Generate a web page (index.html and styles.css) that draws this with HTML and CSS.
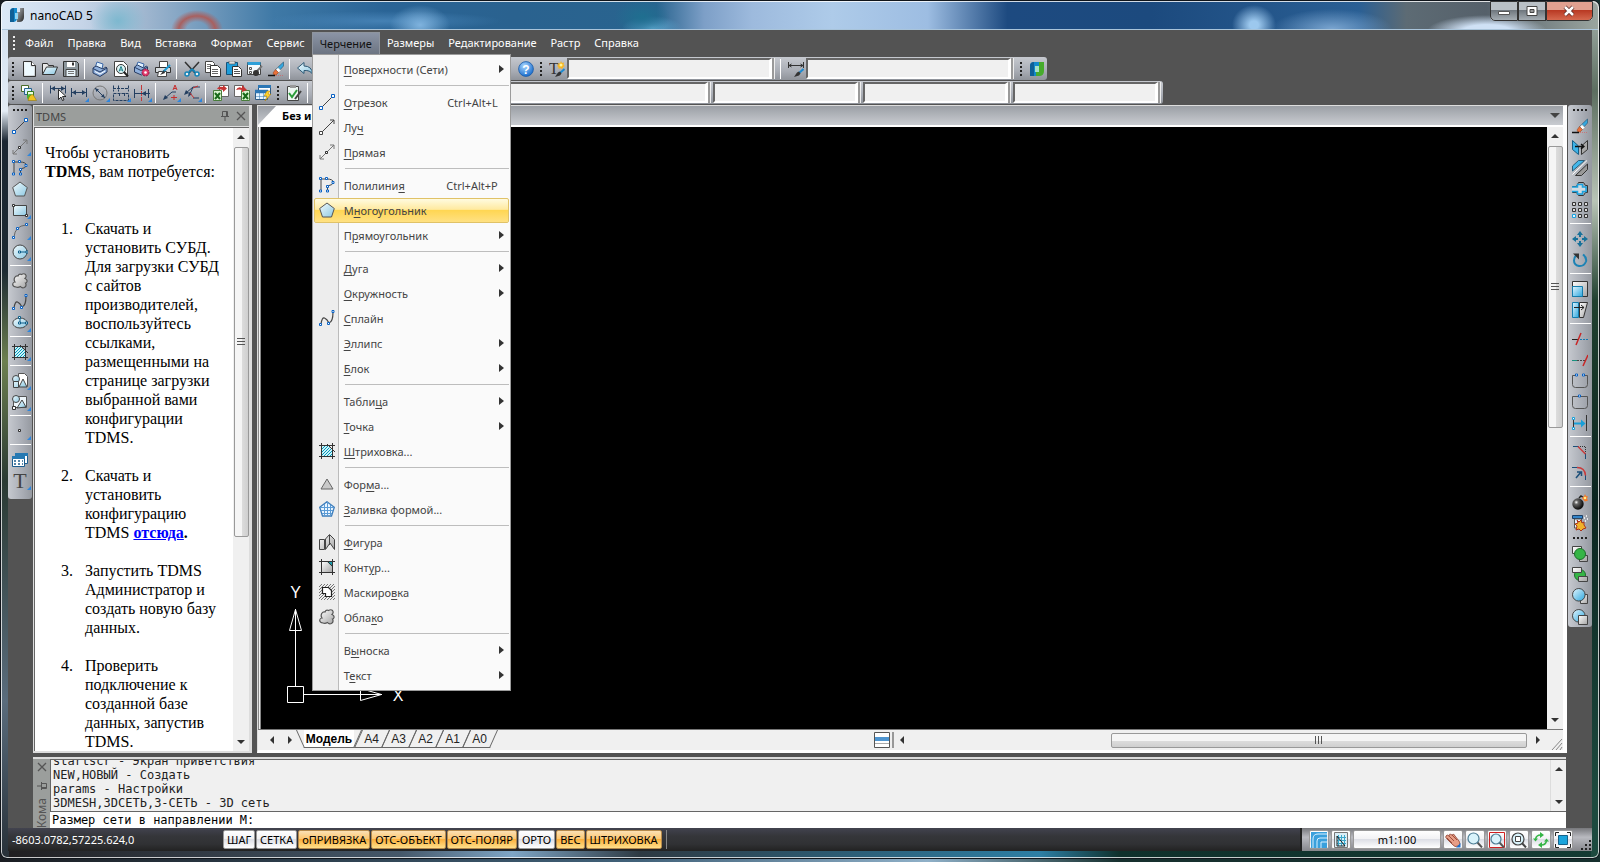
FILE: index.html
```html
<!DOCTYPE html>
<html lang="ru">
<head>
    <meta charset="UTF-8">
    <title>nanoCAD 5</title>
    <link rel="stylesheet" href="styles.css">
</head>
<body>
<!-- icon sprite -->
<svg class="sprite" aria-hidden="true">
    <defs>
        <linearGradient id="gBlue" x1="0" y1="0" x2="1" y2="1"><stop offset="0" stop-color="#f2fbfe"/><stop offset="1" stop-color="#8cc8e2"/></linearGradient>
        <linearGradient id="gSky" x1="0" y1="0" x2="1" y2="1"><stop offset="0" stop-color="#e4f6ff"/><stop offset="1" stop-color="#2ba7de"/></linearGradient>
        <linearGradient id="gGrey" x1="0" y1="0" x2="1" y2="1"><stop offset="0" stop-color="#ffffff"/><stop offset="1" stop-color="#a4a4a4"/></linearGradient>
        <linearGradient id="gLogo" x1="0" y1="0" x2="1" y2="1"><stop offset="0" stop-color="#b5b9bd"/><stop offset="1" stop-color="#222"/></linearGradient>
        <radialGradient id="gHelp" cx=".4" cy=".3" r=".7"><stop offset="0" stop-color="#a9d6ff"/><stop offset="1" stop-color="#1c6fce"/></radialGradient>
        <radialGradient id="gBomb" cx=".35" cy=".35" r=".6"><stop offset="0" stop-color="#fff"/><stop offset=".3" stop-color="#666"/><stop offset="1" stop-color="#111"/></radialGradient>
        <pattern id="pHatch" width="3" height="3" patternUnits="userSpaceOnUse"><rect width="3" height="3" fill="#c9f3fa"/><path d="M0 3 3 0" stroke="#0797b8"/></pattern>
        <pattern id="pMask" width="3" height="3" patternUnits="userSpaceOnUse"><path d="M0 3 3 0" stroke="#555" stroke-width=".8"/></pattern>
    </defs>
    <symbol id="logo" viewBox="0 0 16 16"><path d="M1 15V5q0-4 4-4h3v10q0 4-4 4z" fill="#1389cc"/><path d="M1 15V5q0-4 4-4v14z" fill="#0f5f96"/><path d="M8 15V5h3V1h4v9q0 5-5 5z" fill="url(#gLogo)"/><path d="M6 6h3v6H6z" fill="#8fd3f3"/></symbol>
    <symbol id="logo-green" viewBox="0 0 16 16"><path d="M1 15V5q0-4 4-4h5v4H8v10z" fill="#1389cc"/><path d="M1 15V5q0-4 4-4v14z" fill="#0f5f96"/><path d="M7 15v-4h3V1h5v9q0 5-5 5z" fill="#46ac2c"/><path d="M6 5h4v6H6z" fill="#a7e0c8"/></symbol>
    <symbol id="new" viewBox="0 0 16 16"><path d="M2.500.5h8l4 4v11h-12z" fill="url(#gGrey)" stroke="#333"/><path d="M3.500 1.500h6v4h4v9h-10z" fill="#eefaff"/><path d="M10.500.5v4h4" fill="#fff" stroke="#333"/></symbol>
    <symbol id="open" viewBox="0 0 16 16"><path d="M.5 13.500v-11h5l1 2h5v3" fill="#e9e9e9" stroke="#333"/><path d="M.5 13.500 4.500 6h11l-3 7.500z" fill="url(#gBlue)" stroke="#333"/></symbol>
    <symbol id="save" viewBox="0 0 16 16"><path d="M.5.5h13l2 2v13H.5z" fill="#8d979d" stroke="#333"/><path d="M4 1h8v5H4z" fill="#fff"/><path d="M9 1.500h2v3H9z" fill="#333"/><path d="M3 8.500h10v7H3z" fill="#e9f6fc" stroke="#444"/><path d="M5 10.500h6M5 12.500h6" stroke="#777"/></symbol>
    <symbol id="print" viewBox="0 0 16 16"><path d="M3 7l2-6 6 2-1 5" fill="#e2f2ff" stroke="#3a66a8"/><path d="M1 7l3-2 7 3 3-2 1 1v4l-7 4.500L1 12z" fill="#8fb0dd" stroke="#273c63"/><path d="M1 7.500l7 3.500 7-4" fill="none" stroke="#273c63"/><path d="M3 10.500l5 2.500 5-3" stroke="#fff" fill="none"/></symbol>
    <symbol id="preview" viewBox="0 0 16 16"><path d="M1.500.5h9l4 4v11h-13z" fill="#fff" stroke="#444"/><circle cx="8" cy="8" r="4.500" fill="#ddf4f6" stroke="#333"/><path d="M6 10.500 8 5.500l2 5M7 9h2" fill="none" stroke="#157a83"/><path d="M11 11l4 4.500" stroke="#222" stroke-width="2"/></symbol>
    <symbol id="plot" viewBox="0 0 16 16"><path d="M2 6l2-5 6 2-1 4" fill="#e2f2ff" stroke="#3a66a8"/><path d="M.5 6l3-2 6 3 3-2 1 1v4l-6 4-7-3z" fill="#8fb0dd" stroke="#273c63"/><path d="M1 6.500l6 3 6-3" fill="none" stroke="#273c63"/><circle cx="11.500" cy="11.500" r="3.500" fill="#e23a6d" stroke="#8e1238" stroke-dasharray="2 1"/><circle cx="11.500" cy="11.500" r="1.300" fill="#fff"/></symbol>
    <symbol id="print-setup" viewBox="0 0 16 16"><path d="M4.500 6V.5h8V6" fill="#fff" stroke="#444"/><path d="M.5 6.500h15v5H.5z" fill="#d6dbdf" stroke="#333"/><path d="M3.500 10.500h8v5h-9z" fill="#fff" stroke="#444"/><path d="M15 4 8 11" stroke="#1b9ad6" stroke-width="2"/><path d="M9 9l-4 5 5-2z" fill="#333"/></symbol>
    <symbol id="cut" viewBox="0 0 16 16"><path d="M1 1l10 11M15 1 5 12" stroke="#333" stroke-width="1.500"/><path d="M8 8l3 3M8 8l-3 3" stroke="#1484b8" stroke-width="2"/><circle cx="3" cy="13" r="2" fill="#eee" stroke="#1484b8" stroke-width="1.500"/><circle cx="13" cy="13" r="2" fill="#eee" stroke="#1484b8" stroke-width="1.500"/></symbol>
    <symbol id="copy" viewBox="0 0 16 16"><path d="M.5.5h7l2 2v9h-9z" fill="#fff" stroke="#444"/><path d="M2 3.500h4M2 5.500h4M2 7.500h4" stroke="#777"/><path d="M5.500 4.500h7l3 3v8h-10z" fill="#fff" stroke="#333"/><path d="M7 8.500h6M7 10.500h6M7 12.500h6" stroke="#666"/></symbol>
    <symbol id="paste" viewBox="0 0 16 16"><path d="M.5 1.500h11v12H.5z" fill="#1d9dda" stroke="#15537a"/><path d="M3 0h6v3H3z" fill="#ddd" stroke="#555" stroke-width=".6"/><path d="M6.500 5.500h6l3 3v7h-9z" fill="#fff" stroke="#333"/><path d="M8 8.500h4M8 10.500h6M8 12.500h6" stroke="#555"/></symbol>
    <symbol id="match" viewBox="0 0 16 16"><path d="M.5 1.500h13v12H.5z" fill="#f4f9fc" stroke="#444"/><path d="M.5 1h13v3H.5z" fill="#2d9fd8"/><path d="M2.500 6.500h2v2h-2zM2.500 10.500h2v2h-2z" fill="none" stroke="#555"/><path d="M15 5 9 11" stroke="#777" stroke-width="2"/><circle cx="9" cy="12" r="3" fill="#333"/></symbol>
    <symbol id="brush" viewBox="0 0 16 16"><path d="M15.500 1v4L10 11 7.500 8.500z" fill="#35a8e0" stroke="#22536e" stroke-width=".6"/><path d="M10 6.500l3 3-2.500 2.500-3-3z" fill="#fff" stroke="#888" stroke-width=".6"/><path d="M7.500 8.500l3 3L8 14H6l-1-2z" fill="#e9713a" stroke="#8c3c1a" stroke-width=".5"/><path d="M0 14.500h7" stroke="#111" stroke-width="1.500"/><path d="M8 14.500h7" stroke="#d55" stroke-width=".6" stroke-dasharray="1 1"/></symbol>
    <symbol id="undo" viewBox="0 0 16 16"><path d="M.5 7 7 1.500V5q8 0 8.500 8Q13 9 7 9.500v3z" fill="url(#gBlue)" stroke="#2c5874"/></symbol>
    <symbol id="dim-style" viewBox="0 0 16 16"><path d="M.5 1v6M15.500 1v6M1 4.500h14M3.500 3 1 4.500 3.500 6M12.500 3 15 4.500 12.500 6" fill="none" stroke="#333"/><path d="M15.500 8 11 12" stroke="#1d8ad0" stroke-width="2"/><path d="M11 10.500l-2 1-3 4.500 5-1.500 1.500-2z" fill="#333"/></symbol>
    <symbol id="layers" viewBox="0 0 16 16"><path d="M.5.5h7v6h-7z" fill="#fff" stroke="#4a6d2a"/><path d="M3.500 3.500h7v6h-7z" fill="#d9f2ff" stroke="#27628f"/><path d="M6.500 6.500h6v6h-6z" fill="#ecffe0" stroke="#347a19"/><circle cx="9" cy="12" r="3" fill="#4bb636"/><path d="M7 15.500q1-6 5-6l3.500 6z" fill="#f0c321" stroke="#8b6c00" stroke-width=".5"/></symbol>
    <symbol id="dim-select" viewBox="0 0 16 16"><path d="M.5.5v8M15.500.5v8M0 3.500h16" stroke="#243f60"/><path d="M1 3.500l4-2.500v5zM15 3.500 11 1v5z" fill="#243f60"/><path d="M8.500 4.500v10l2.500-2.500 1.500 3.500 1.500-.7-1.500-3.300H16z" fill="#fff" stroke="#000" stroke-width=".8"/></symbol>
    <symbol id="dim" viewBox="0 0 16 16"><path d="M.5 3v9M15.500 3v9M1 7.500h14" stroke="#243f60"/><path d="M1 7.500 5 5v5zM15 7.500 11 5v5z" fill="#243f60"/></symbol>
    <symbol id="diameter" viewBox="0 0 16 16"><circle cx="8" cy="8" r="7" fill="none" stroke="#777"/><path d="M3 3l10 10" stroke="#243f60"/><path d="M3 3l4 1.500L4.500 7zM13 13l-4-1.500L11.500 9z" fill="#243f60"/></symbol>
    <symbol id="dim-group" viewBox="0 0 16 16"><path d="M.5.5v6M5.500.5v6M15.500.5v6M0 3.500h16M.5 8.500h15v7H.5zM6.500 8v3M11.500 8v3" fill="none" stroke="#243f60" stroke-dasharray="3 1"/></symbol>
    <symbol id="dim-center" viewBox="0 0 16 16"><path d="M7.500 0v16" stroke="#c43a3a" stroke-dasharray="5 1"/><path d="M.5 4v9M14.500 4v9M0 8.500h16" stroke="#243f60"/><path d="M7.500 8.500 12 6v5z" fill="#243f60"/></symbol>
    <symbol id="leader" viewBox="0 0 16 16"><path d="M1 14 9 7h4" fill="none" stroke="#243f60"/><path d="M0 15l5-2-3-3z" fill="#243f60"/><path d="M10 5l2-5 2 5M11 3.500h2M8 12.500h6M11 10v5" fill="none" stroke="#c62f2f"/></symbol>
    <symbol id="leader-tree" viewBox="0 0 16 16"><path d="M2 8 9 2h7M9 2 6 9M9 13h6" fill="none" stroke="#243f60"/><path d="M0 10l5-2-3-3zM4 12l1-5 3 2z" fill="#243f60"/><path d="M6 8l4 5M9 3l5-2" stroke="#c62f2f"/></symbol>
    <symbol id="xls-in" viewBox="0 0 16 16"><path d="M6.500.5h9v11h-9z" fill="#fff" stroke="#666"/><path d="M.5 5.500h8v10h-8z" fill="#d9f5cf" stroke="#4a7d3c"/><path d="M2 8l5 6M7 8l-5 6" stroke="#1a6b1a" stroke-width="2"/><path d="M4 4q1-3 6-2V0l4 3.500L10 7V5Q6 4 4 4z" fill="#c63434"/></symbol>
    <symbol id="xls-out" viewBox="0 0 16 16"><path d="M.5.5h9v11h-9z" fill="#fff" stroke="#666"/><path d="M7.500 5.500h8v10h-8z" fill="#d9f5cf" stroke="#4a7d3c"/><path d="M9 8l5 6M14 8l-5 6" stroke="#1a6b1a" stroke-width="2"/><path d="M2 5q2-4 6-2V0l5 5-5 2V5Q5 4 2 5z" fill="#c63434"/></symbol>
    <symbol id="table-flash" viewBox="0 0 16 16"><path d="M3.500.5h12v9h-12z" fill="#fff" stroke="#2c5a85"/><path d="M3 0h13v3H3z" fill="#2c77b5"/><path d="M.5 5.500h12v9H.5z" fill="#e7f5ff" stroke="#2c5a85"/><path d="M0 5h13v3H0zM1 11.500h11M4.500 8v6M8.500 8v6" fill="#2c77b5" stroke="#2c77b5" stroke-width=".5"/><path d="M12 6l-3 5h3l-2 5 6-7h-3l2-3z" fill="#ffd22e" stroke="#a87b00" stroke-width=".5"/></symbol>
    <symbol id="check-edit" viewBox="0 0 16 16"><path d="M1.500 1.500h11v14h-11z" fill="#eef7f2" stroke="#444"/><path d="M4 0h6v3H4z" fill="#999"/><path d="M3 8l3 4 5-7" fill="none" stroke="#2b9c3a" stroke-width="2"/><path d="M15 6 9 14" stroke="#444" stroke-width="2"/></symbol>

    <symbol id="line" viewBox="0 0 16 16"><path d="M2 14 14 2" stroke="#444"/><path d="M.5 12.500h3v3h-3zM12.500.5h3v3h-3z" fill="#fff" stroke="#0a62c4"/></symbol>
    <symbol id="ray" viewBox="0 0 16 16"><path d="M2 14 15 1M11 1h4v4" fill="none" stroke="#444"/><path d="M.5 12.500h3v3h-3z" fill="#fff" stroke="#444"/></symbol>
    <symbol id="xline" viewBox="0 0 16 16"><path d="M1 15 15 1M11 1h4v4M1 11v4h4" fill="none" stroke="#777"/><path d="M6.500 7.500h2v2h-2z" fill="#fff" stroke="#333"/></symbol>
    <symbol id="pline" viewBox="0 0 16 16"><path d="M2 14V2h6q6 0 6.500 3.500Q14 8 8.500 9v5" fill="none" stroke="#444"/><path d="M.5.5h2v2h-2zM6.500.5h2v2h-2zM13 4.500h2v2h-2zM7.500 8.500h2v2h-2zM.5 13h2v2h-2zM7.500 13h2v2h-2z" fill="#fff" stroke="#0a62c4"/></symbol>
    <symbol id="polygon" viewBox="0 0 16 16"><path d="M8 1l7.300 5.500L12.500 15h-9L.7 6.500z" fill="url(#gBlue)" stroke="#555"/></symbol>
    <symbol id="rect" viewBox="0 0 16 16"><path d="M1.500 3.500h13v10h-13z" fill="url(#gBlue)" stroke="#444"/><path d="M.5 2.500h2v2h-2zM13.500 12.500h2v2h-2z" fill="#fff" stroke="#333"/></symbol>
    <symbol id="arc" viewBox="0 0 16 16"><path d="M2 14Q3 3 14 2" fill="none" stroke="#666"/><path d="M.5 13.500h2v2h-2zM4.500 4.500h2v2h-2zM13.500.5h2v2h-2z" fill="#fff" stroke="#0a62c4"/></symbol>
    <symbol id="circle" viewBox="0 0 16 16"><circle cx="8" cy="8" r="7" fill="url(#gBlue)" stroke="#444"/><path d="M8 8h7" stroke="#0d5f8a"/><path d="M6.500 7h2v2h-2zM14 7h2v2h-2z" fill="#fff" stroke="#0d5f8a"/></symbol>
    <symbol id="cloud" viewBox="0 0 16 16"><path d="M6 3q1-2.500 3.500-1.500Q12 0 13.500 1.500q1.500 2-.5 4 2.500 1 2 3-.200 1.500-1.500 1.500 1.500 3-1 4.500-2.500 1-4-1-2.500 1.500-4.500.5Q.5 13.500.7 11q.3-2 2.300-2-1.500-2-.3-4.500Q4 2.500 6 3z" fill="url(#gGrey)" stroke="#555" stroke-width="1.200"/></symbol>
    <symbol id="spline" viewBox="0 0 16 16"><path d="M2 14Q3 7 5.500 8T10 13q4-1 4-11" fill="none" stroke="#444" stroke-width="1.200"/><path d="M.5 13.500h2v2h-2zM8.500 12.500h2v2h-2zM13 .5h2v2h-2z" fill="#fff" stroke="#0a62c4"/></symbol>
    <symbol id="ellipse" viewBox="0 0 16 16"><ellipse cx="8" cy="8" rx="7.200" ry="5" fill="url(#gBlue)" stroke="#444"/><path d="M8 3v5h7" fill="none" stroke="#0d5f8a"/><path d="M6.500 1.500h2v2h-2zM6.500 7h2v2h-2zM13.500 7h2v2h-2z" fill="#fff" stroke="#0d5f8a"/></symbol>
    <symbol id="hatch" viewBox="0 0 16 16"><path d="M2.500 2.500h6l5 5v6h-11z" fill="url(#pHatch)"/><path d="M2.500 0v16M13.500 0v16M0 2.500h16M0 13.500h16M8 1l8 8" fill="none" stroke="#333"/></symbol>
    <symbol id="block-make" viewBox="0 0 16 16"><path d="M6.500.5h6l3 3v10h-9z" fill="#fff" stroke="#555"/><circle cx="4" cy="6" r="3.500" fill="url(#gBlue)" stroke="#444"/><path d="M1.500 8.500h5v6h-5zM7 14l4-8 4 8z" fill="url(#gBlue)" stroke="#444"/></symbol>
    <symbol id="block-insert" viewBox="0 0 16 16"><path d="M1.500 2.500h13v11h-13z" fill="#eef6fa" stroke="#555"/><circle cx="4" cy="5" r="3.500" fill="url(#gBlue)" stroke="#444"/><path d="M5 14l5-8 4 7z" fill="url(#gBlue)" stroke="#444"/><path d="M.5 12.500h3v3h-3z" fill="#fff" stroke="#333"/></symbol>
    <symbol id="point" viewBox="0 0 16 16"><path d="M6.500 6.500h2v2h-2z" fill="#fff" stroke="#333"/></symbol>
    <symbol id="table" viewBox="0 0 16 16"><path d="M3.500 1.500h12v10h-12z" fill="#fff" stroke="#1d5d8e"/><path d="M3 1h13v3H3z" fill="#2679b2"/><path d="M.5 4.500h12v10H.5z" fill="#fff" stroke="#1d5d8e"/><path d="M0 4h13v3H0z" fill="#2679b2"/><path d="M2 9h2M6 9h2M10 9h1M2 12h2M6 12h2M10 12h1" stroke="#1d5d8e" stroke-width="1.500"/></symbol>

    <symbol id="mirror" viewBox="0 0 16 16"><path d="M.5 1.500 6.500 7v8.500L.5 10.500z" fill="#3db3e8" stroke="#175f86"/><path d="M15.500 1.500v9l-6 5V7z" fill="#a8a8a8" stroke="#333"/><path d="M3 7.500h9M9 5l3 2.500L9 10" fill="none" stroke="#111" stroke-width="1.300"/></symbol>
    <symbol id="offset" viewBox="0 0 16 16"><path d="M.5 11V6l6-5.500h6z" fill="#43b7ea" stroke="#2c5f7a"/><path d="M15.500 4v5.500l-6 6H3.500z" fill="#999" stroke="#333"/><path d="M.5 14.500 15 .5" stroke="#fff"/></symbol>
    <symbol id="stretch" viewBox="0 0 16 16"><path d="M.5 5.500h4l2-4h5l2 3h2v7h-2l-2 3h-5l-2-3h-4z" fill="none" stroke="#333"/><path d="M0 6h5.500V3.500h5V6H14v4.500h-3.500v2.500h-5v-2.500H0" fill="#d2dbe2" stroke="#1ba2df" stroke-width="1.500"/></symbol>
    <symbol id="array" viewBox="0 0 16 16"><path d="M.5.5h3v3h-3zM6.500.5h3v3h-3zM12.500.5h3v3h-3zM.5 6.500h3v3h-3zM6.500 6.500h3v3h-3zM12.500 6.500h3v3h-3zM6.500 12.500h3v3h-3zM12.500 12.500h3v3h-3z" fill="#ddd" stroke="#333"/><path d="M.5 12.500h3v3h-3z" fill="#e2f6ff" stroke="#1ba2df"/></symbol>
    <symbol id="move" viewBox="0 0 16 16"><path d="M8 0l3 4H5zM8 16l-3-4h6zM0 8l4-3v6zM16 8l-4 3V5z" fill="#17719a"/><path d="M8 4v2M8 10v2M4 8h2M10 8h2" stroke="#17719a" stroke-width="2"/></symbol>
    <symbol id="rotate" viewBox="0 0 16 16"><path d="M11 2.500q4 3 3 7-2 5-7 4.500-5-1-5-5.500 0-3 2-5" fill="none" stroke="#1d83b5" stroke-width="2"/><path d="M1 1.500h6v6z" fill="#333"/></symbol>
    <symbol id="scale" viewBox="0 0 16 16"><path d="M.5.5h15v15H.5z" fill="url(#gGrey)" stroke="#333"/><path d="M.5 5.500h10v10H.5z" fill="url(#gSky)" stroke="#137cad"/></symbol>
    <symbol id="resize" viewBox="0 0 16 16"><path d="M7.500.5h8l-4 15h-4z" fill="url(#gGrey)" stroke="#333"/><path d="M.5.5h6v15h-6z" fill="url(#gSky)" stroke="#137cad"/><path d="M2 5.500h10M9 3l3 2.500L9 8" fill="none" stroke="#222"/></symbol>
    <symbol id="trim" viewBox="0 0 16 16"><path d="M0 8.500h6" stroke="#222"/><path d="M8 8.500h8" stroke="#1878b0" stroke-dasharray="2 1"/><path d="M4 14 9 2" stroke="#c92525" stroke-width="1.500"/></symbol>
    <symbol id="extend" viewBox="0 0 16 16"><path d="M0 8.500h5" stroke="#18907f"/><path d="M5 8.500h8" stroke="#444" stroke-dasharray="2 1"/><path d="M11 14l5-11" stroke="#c92525" stroke-width="1.500"/></symbol>
    <symbol id="break" viewBox="0 0 16 16"><path d="M3 2.500H.5v9q0 3 3 3h9q3 0 3-3v-9H13" fill="none" stroke="#555"/><path d="M3.500 1h2v2h-2zM10.500 1h2v2h-2z" fill="#fff" stroke="#0a62c4"/></symbol>
    <symbol id="join" viewBox="0 0 16 16"><path d="M7 2.500H.5v9q0 3 3 3h9q3 0 3-3v-9H8" fill="none" stroke="#555"/><path d="M6.500 1h2v2h-2z" fill="#fff" stroke="#0a62c4"/></symbol>
    <symbol id="align" viewBox="0 0 16 16"><path d="M1.500 3v11M14.500 0v16" stroke="#333"/><path d="M2 8.500h9" stroke="#189fd8" stroke-width="2"/><path d="M9 4.500 13.500 8.500 9 12.500z" fill="#189fd8"/><path d="M.5 2.500h2v2h-2zM.5 12.500h2v2h-2z" fill="#fff" stroke="#189fd8"/></symbol>
    <symbol id="chamfer" viewBox="0 0 16 16"><path d="M1 2.500h6M13.500 9v6" stroke="#1c4f79"/><path d="M6 2.500 13.500 10" stroke="#c93b3b" stroke-width="1.500"/><path d="M8 2.500h5.500V9" fill="none" stroke="#333" stroke-dasharray="1 1"/></symbol>
    <symbol id="fillet" viewBox="0 0 16 16"><path d="M0 2.500h6M13.500 9v6" stroke="#1c4f79"/><path d="M5 2.500q8 0 8.500 8" fill="none" stroke="#c93b3b" stroke-width="1.500"/><path d="M4 13l5-6M5 7h4.500v4" fill="none" stroke="#1c4f79" stroke-width="1.500"/></symbol>
    <symbol id="bomb" viewBox="0 0 16 16"><circle cx="6" cy="10" r="5.700" fill="url(#gBomb)"/><path d="M7 4l2-2 3 2" fill="none" stroke="#222" stroke-width="1.500"/><path d="M13 0l1 2 2 .5-1 2 1 2-3 1-2-2-1-2 2-1z" fill="#f57b2a"/><circle cx="13" cy="4" r="1.300" fill="#fff08a"/></symbol>
    <symbol id="explode" viewBox="0 0 16 16"><path d="M.5.5h10v3H.5z" fill="#3384c9" stroke="#1b3f66"/><path d="M2.500 4h7v9h-7z" fill="#e5f0fa" stroke="#555"/><path d="M5 5l2 2 2-2 1 3 2-1v3l2 3-3 1-2 2-2-2-3 1 1-4-2-2 3-1z" fill="#f0b22a" stroke="#a8321b"/><path d="M12 3h1M14 1h1M15 4h1M13 6h1" stroke="#fff" stroke-width="1.500"/></symbol>
    <symbol id="order-1" viewBox="0 0 16 16"><path d="M.5.5h9v7h-9zM7.500 9.500h8v6h-8z" fill="url(#gGrey)" stroke="#444"/><circle cx="8" cy="8" r="5.500" fill="#35b546" stroke="#1d6e2a"/></symbol>
    <symbol id="order-2" viewBox="0 0 16 16"><circle cx="8" cy="8" r="5.500" fill="#35b546" stroke="#1d6e2a"/><path d="M.5.5h9v5h-9zM6.500 9.500h9v5h-9z" fill="url(#gGrey)" stroke="#444"/></symbol>
    <symbol id="order-3" viewBox="0 0 16 16"><path d="M8.500 6.500h7v9h-7z" fill="url(#gGrey)" stroke="#444"/><circle cx="6.800" cy="6.800" r="6.300" fill="url(#gSky)" stroke="#444"/></symbol>
    <symbol id="order-4" viewBox="0 0 16 16"><circle cx="6.800" cy="6.800" r="6.300" fill="url(#gSky)" stroke="#444"/><path d="M6.500 6.500h9v9h-9z" fill="url(#gGrey)" stroke="#444"/></symbol>

    <symbol id="shape" viewBox="0 0 16 16"><path d="M8 3l6 10H2z" fill="#c9c9c9" stroke="#666"/></symbol>
    <symbol id="shape-fill" viewBox="0 0 16 16"><path d="M8 .7l7.300 5.500L12.500 15h-9L.7 6.200z" fill="#eaf5ff" stroke="#3d7dbb" stroke-width="1.300"/><path d="M5.500 3v12M8.500 1v14M11.500 4v10M1 6.500h14M2 9.500h12M3 12.500h10" stroke="#5b9bd5"/></symbol>
    <symbol id="figure" viewBox="0 0 16 16"><path d="M.5 5.500h5v10h-5zM6.500 15.500V5l4-4.500 5 5v10L11 9z" fill="url(#gGrey)" stroke="#444"/><path d="M10.500 1v10" stroke="#444"/></symbol>
    <symbol id="contour" viewBox="0 0 16 16"><path d="M2.500 2.500h6l5 5v6h-11z" fill="url(#gGrey)"/><path d="M8 2.500h5.500V8z" fill="#1698a8"/><path d="M2.500 0v16M13.500 0v16M0 2.500h16M0 13.500h16M8 2l6 6" fill="none" stroke="#333"/></symbol>
    <symbol id="mask" viewBox="0 0 16 16"><path d="M0 0h16v16H0z" fill="url(#pMask)"/><path d="M3.500 3.500h6l3 3v6h-6v-3h-3z" fill="#fff" stroke="#222" stroke-width="1.200"/></symbol>

    <symbol id="lines-mode" viewBox="0 0 16 16"><path d="M0 0h16v16H0z" fill="#3aa0dc"/><path d="M2 16V7q0-5 5-5h9M6 16V9q0-3 3-3h7M10 16v-6h6" fill="none" stroke="#d8f0ff"/></symbol>
    <symbol id="grid-mode" viewBox="0 0 16 16"><path d="M1.500.5h13v15h-13z" fill="#d9eef6" stroke="#777"/><path d="M5.500 3v11M8.500 3v11M11.500 3v11M4 5.500h9M4 8.500h9M4 11.500h9" stroke="#3aa7cb"/><path d="M4 4l8 10H4z" fill="none" stroke="#222"/></symbol>
    <symbol id="hand" viewBox="0 0 16 16"><path d="M1 4q1-2 3 0 0-3 3-1 2-2 3 1l4 5q2 4-1 5-3 2-6-2L2 7q-2-2-1-3z" fill="#e79d86" stroke="#8a3b2b" stroke-width=".8"/><path d="M4 4l5 5M7 3l5 5M2 6l5 5" stroke="#8a3b2b" stroke-width=".8"/><path d="M15.500 11v4.500H11z" fill="#1a6fd0"/></symbol>
    <symbol id="zoom" viewBox="0 0 16 16"><path d="M10 10l5 5.500" stroke="#555" stroke-width="2"/><circle cx="6.500" cy="6.500" r="5.500" fill="#d9f3fb" stroke="#4c7d94" stroke-width="1.200"/></symbol>
    <symbol id="zoom-all" viewBox="0 0 16 16"><path d="M.5.5h15v15H.5z" fill="none" stroke="#cf2020"/><path d="M10 10l5 5.500" stroke="#555" stroke-width="2"/><circle cx="7" cy="7" r="5" fill="#d9f3fb" stroke="#4c7d94" stroke-width="1.200"/></symbol>
    <symbol id="zoom-window" viewBox="0 0 16 16"><path d="M10 10l5 5.500" stroke="#444" stroke-width="2"/><circle cx="7" cy="7" r="6" fill="#d9f3fb" stroke="#444" stroke-width="1.200"/><path d="M4.500 4.500h5v5h-5z" fill="#fff" stroke="#444"/></symbol>
    <symbol id="refresh" viewBox="0 0 16 16"><path d="M2.500 7q1-4 5-4M13.500 9q-1 4-5 4" fill="none" stroke="#35b546" stroke-width="1.500"/><path d="M7 0l4 3-4 3zM9 10v6l-4-3zM0 6.500h5l-2.500 3zM11 9.500h5l-2.500-3z" fill="#35b546"/></symbol>
    <symbol id="fit" viewBox="0 0 16 16"><path d="M3.500 3.500h9v9h-9z" fill="#1aa4dc" stroke="#15628a"/><path d="M.5 4V.5H4M12 .5h3.500V4M15.500 12v3.500H12M4 15.500H.5V12" fill="none" stroke="#222"/></symbol>
    <symbol id="panes" viewBox="0 0 16 16"><path d="M.5.5h15v15H.5z" fill="#fff" stroke="#555"/><path d="M1 5h14v4H1z" fill="#4e95d0"/><path d="M1 11.500h14" stroke="#aaa"/></symbol>
    <symbol id="pin" viewBox="0 0 16 16"><path d="M5.500 3.500h5v5h-5zM4 8.500h8M8 9v4M9.500 4v4" fill="none" stroke="#555"/></symbol>
    <symbol id="close" viewBox="0 0 16 16"><path d="M4 4l8 8M12 4l-8 8" stroke="#555" stroke-width="1.300"/></symbol>
</svg>

<div class="window">
    <header class="title-bar">
        <svg class="icon"><use href="#logo"/></svg>
        <h1>nanoCAD 5</h1>
        <div class="caption-buttons">
            <button type="button" aria-label="Свернуть"><svg viewBox="0 0 16 12"><path d="M2.500 6.500h11v3h-11z" fill="#fff" stroke="#555"/></svg></button>
            <button type="button" aria-label="Развернуть"><svg viewBox="0 0 16 12"><path d="M3 1.500h10v9H3z" fill="#fff" stroke="#444"/><path d="M6 4.500h4v3H6z" fill="#999" stroke="#444"/></svg></button>
            <button type="button" class="close" aria-label="Закрыть"><svg viewBox="0 0 16 12"><path d="M4 2l8 8M12 2l-8 8" stroke="#5a2a26" stroke-width="4"/><path d="M4 2l8 8M12 2l-8 8" stroke="#fff" stroke-width="2.500"/></svg></button>
        </div>
    </header>

    <div class="client">
        <nav class="menu-bar">
            <span class="grip"></span>
            <button type="button">Файл</button>
            <button type="button">Правка</button>
            <button type="button">Вид</button>
            <button type="button">Вставка</button>
            <button type="button">Формат</button>
            <button type="button">Сервис</button>
            <div class="menu-open">
                <button type="button" class="active" aria-expanded="true">Черчение</button>
                <ul class="drop-menu">
                    <li><button type="button"><span></span><span><u>П</u>оверхности (Сети)</span><i class="more"></i></button></li>
                    <li class="line"></li>
                    <li><button type="button"><svg class="icon"><use href="#line"/></svg><span><u>О</u>трезок</span><kbd>Ctrl+Alt+L</kbd></button></li>
                    <li><button type="button"><svg class="icon"><use href="#ray"/></svg><span>Лу<u>ч</u></span></button></li>
                    <li><button type="button"><svg class="icon"><use href="#xline"/></svg><span><u>П</u>рямая</span></button></li>
                    <li class="line"></li>
                    <li><button type="button"><svg class="icon"><use href="#pline"/></svg><span>Полилини<u>я</u></span><kbd>Ctrl+Alt+P</kbd></button></li>
                    <li><button type="button" class="hover"><svg class="icon"><use href="#polygon"/></svg><span>М<u>н</u>огоугольник</span></button></li>
                    <li><button type="button"><span></span><span>П<u>р</u>ямоугольник</span><i class="more"></i></button></li>
                    <li class="line"></li>
                    <li><button type="button"><span></span><span><u>Д</u>уга</span><i class="more"></i></button></li>
                    <li><button type="button"><span></span><span><u>О</u>кружность</span><i class="more"></i></button></li>
                    <li><button type="button"><svg class="icon"><use href="#spline"/></svg><span><u>С</u>плайн</span></button></li>
                    <li><button type="button"><span></span><span><u>Э</u>ллипс</span><i class="more"></i></button></li>
                    <li><button type="button"><span></span><span><u>Б</u>лок</span><i class="more"></i></button></li>
                    <li class="line"></li>
                    <li><button type="button"><span></span><span>Табли<u>ц</u>а</span><i class="more"></i></button></li>
                    <li><button type="button"><span></span><span><u>Т</u>очка</span><i class="more"></i></button></li>
                    <li><button type="button"><svg class="icon"><use href="#hatch"/></svg><span><u>Ш</u>триховка...</span></button></li>
                    <li class="line"></li>
                    <li><button type="button"><svg class="icon"><use href="#shape"/></svg><span>Фор<u>м</u>а...</span></button></li>
                    <li><button type="button"><svg class="icon"><use href="#shape-fill"/></svg><span><u>З</u>аливка формой...</span></button></li>
                    <li class="line"></li>
                    <li><button type="button"><svg class="icon"><use href="#figure"/></svg><span><u>Ф</u>игура</span></button></li>
                    <li><button type="button"><svg class="icon"><use href="#contour"/></svg><span>Конт<u>у</u>р...</span></button></li>
                    <li><button type="button"><svg class="icon"><use href="#mask"/></svg><span>Маскиро<u>в</u>ка</span></button></li>
                    <li><button type="button"><svg class="icon"><use href="#cloud"/></svg><span>Обла<u>к</u>о</span></button></li>
                    <li class="line"></li>
                    <li><button type="button"><span></span><span>В<u>ы</u>носка</span><i class="more"></i></button></li>
                    <li><button type="button"><span></span><span>Т<u>е</u>кст</span><i class="more"></i></button></li>
                </ul>
            </div>
            <button type="button">Размеры</button>
            <button type="button">Редактирование</button>
            <button type="button">Растр</button>
            <button type="button">Справка</button>
        </nav>

        <div class="toolbars">
            <div class="toolbar">
                <span class="grip"></span>
                <button type="button" aria-label="Создать"><svg class="icon"><use href="#new"/></svg></button>
                <button type="button" aria-label="Открыть"><svg class="icon"><use href="#open"/></svg></button>
                <button type="button" aria-label="Сохранить"><svg class="icon"><use href="#save"/></svg></button>
                <span class="sep"></span>
                <button type="button" aria-label="Печать"><svg class="icon"><use href="#print"/></svg></button>
                <button type="button" aria-label="Просмотр"><svg class="icon"><use href="#preview"/></svg></button>
                <button type="button" aria-label="Параметры печати"><svg class="icon"><use href="#plot"/></svg></button>
                <button type="button" aria-label="Параметры листа"><svg class="icon"><use href="#print-setup"/></svg></button>
                <span class="sep"></span>
                <button type="button" aria-label="Вырезать"><svg class="icon"><use href="#cut"/></svg></button>
                <button type="button" aria-label="Копировать"><svg class="icon"><use href="#copy"/></svg></button>
                <button type="button" aria-label="Вставить"><svg class="icon"><use href="#paste"/></svg></button>
                <button type="button" aria-label="Свойства"><svg class="icon"><use href="#match"/></svg></button>
                <button type="button" aria-label="Копировать свойства"><svg class="icon"><use href="#brush"/></svg></button>
                <span class="sep"></span>
                <button type="button" class="undo" aria-label="Отменить"><svg class="icon"><use href="#undo"/></svg></button>
                <button type="button" aria-label="Помощь"><svg class="icon" viewBox="0 0 16 16"><circle cx="8" cy="8" r="7.400" fill="url(#gHelp)" stroke="#1a5ba6" stroke-width=".8"/><text x="8" y="12.500" class="glyph-help">?</text></svg></button>
                <span class="grip"></span>
                <button type="button" aria-label="Текстовые стили"><svg class="icon" viewBox="0 0 16 16"><text x="5" y="13" class="glyph-style">T</text><path d="M12 0l1 2 2-.5L14.500 4l1.500 1-2 1-.5 2-2-1-2 1V6L8 5l1.500-1L9 2l2 .5z" fill="#f9b61e"/><circle cx="12" cy="4" r="1.500" fill="#fff59a"/><path d="M15.500 8 11 12" stroke="#1d8ad0" stroke-width="2"/><path d="M11 10.500l-2 1-3 4.500 5-1.500 1.500-2z" fill="#333"/></svg></button>
                <select class="style-box" aria-label="Текстовый стиль"><option></option></select>
                <span class="sep"></span>
                <button type="button" aria-label="Размерные стили"><svg class="icon"><use href="#dim-style"/></svg></button>
                <select class="style-box" aria-label="Размерный стиль"><option></option></select>
                <span class="grip"></span>
                <button type="button" aria-label="О программе"><svg class="icon"><use href="#logo-green"/></svg></button>
            </div>
            <div class="toolbar">
                <span class="grip"></span>
                <button type="button" aria-label="Слои"><svg class="icon"><use href="#layers"/></svg></button>
                <span class="sep"></span>
                <button type="button" aria-label="Размер"><svg class="icon"><use href="#dim-select"/></svg></button>
                <button type="button" class="fly" aria-label="Линейный размер"><svg class="icon"><use href="#dim"/></svg></button>
                <button type="button" class="fly" aria-label="Диаметр"><svg class="icon"><use href="#diameter"/></svg></button>
                <button type="button" class="fly" aria-label="Группа размеров"><svg class="icon"><use href="#dim-group"/></svg></button>
                <button type="button" class="fly" aria-label="Маркер центра"><svg class="icon"><use href="#dim-center"/></svg></button>
                <span class="sep"></span>
                <button type="button" class="fly" aria-label="Выноска"><svg class="icon"><use href="#leader"/></svg></button>
                <button type="button" class="fly" aria-label="Гребенчатая выноска"><svg class="icon"><use href="#leader-tree"/></svg></button>
                <span class="sep"></span>
                <button type="button" aria-label="Импорт таблицы"><svg class="icon"><use href="#xls-in"/></svg></button>
                <button type="button" aria-label="Экспорт таблицы"><svg class="icon"><use href="#xls-out"/></svg></button>
                <button type="button" aria-label="Обновить таблицы"><svg class="icon"><use href="#table-flash"/></svg></button>
                <span class="grip"></span>
                <button type="button" aria-label="Проверка"><svg class="icon"><use href="#check-edit"/></svg></button>
                <span class="sep"></span>
                <select class="layer-box" aria-label="Слой"><option></option></select>
                <select class="prop-box" aria-label="Цвет"><option></option></select>
                <select class="prop-box" aria-label="Тип линии"><option></option></select>
                <select class="prop-box" aria-label="Вес линии"><option></option></select>
            </div>
        </div>

        <main class="workspace">
            <div class="toolbar vertical left">
                <span class="grip"></span>
                <button type="button" aria-label="Отрезок"><svg class="icon"><use href="#line"/></svg></button>
                <button type="button" class="fly" aria-label="Прямая"><svg class="icon"><use href="#xline"/></svg></button>
                <button type="button" aria-label="Полилиния"><svg class="icon"><use href="#pline"/></svg></button>
                <button type="button" aria-label="Многоугольник"><svg class="icon"><use href="#polygon"/></svg></button>
                <button type="button" class="fly" aria-label="Прямоугольник"><svg class="icon"><use href="#rect"/></svg></button>
                <button type="button" class="fly" aria-label="Дуга"><svg class="icon"><use href="#arc"/></svg></button>
                <button type="button" class="fly" aria-label="Окружность"><svg class="icon"><use href="#circle"/></svg></button>
                <span class="sep"></span>
                <button type="button" aria-label="Облако"><svg class="icon"><use href="#cloud"/></svg></button>
                <button type="button" aria-label="Сплайн"><svg class="icon"><use href="#spline"/></svg></button>
                <button type="button" class="fly" aria-label="Эллипс"><svg class="icon"><use href="#ellipse"/></svg></button>
                <span class="sep"></span>
                <button type="button" class="fly" aria-label="Штриховка"><svg class="icon"><use href="#hatch"/></svg></button>
                <span class="sep"></span>
                <button type="button" class="fly" aria-label="Создать блок"><svg class="icon"><use href="#block-make"/></svg></button>
                <button type="button" class="fly" aria-label="Вставить блок"><svg class="icon"><use href="#block-insert"/></svg></button>
                <span class="sep"></span>
                <button type="button" class="fly" aria-label="Точка"><svg class="icon"><use href="#point"/></svg></button>
                <span class="sep"></span>
                <button type="button" aria-label="Таблица"><svg class="icon"><use href="#table"/></svg></button>
                <button type="button" class="fly" aria-label="Текст"><svg class="icon" viewBox="0 0 16 16"><text x="8" y="15" class="glyph-text">T</text></svg></button>
            </div>

            <aside class="tdms">
                <header class="panel-title">
                    <h2>TDMS</h2>
                    <button type="button" aria-label="Закрепить"><svg class="icon"><use href="#pin"/></svg></button>
                    <button type="button" aria-label="Закрыть панель"><svg class="icon"><use href="#close"/></svg></button>
                </header>
                <div class="tdms-body">
                    <div class="tdms-text">
                        <p>Чтобы установить <b>TDMS</b>, вам потребуется:</p>
                        <ol>
                            <li>Скачать и установить СУБД. Для загрузки СУБД с сайтов производителей, воспользуйтесь ссылками, размещенными на странице загрузки выбранной вами конфигурации TDMS.</li>
                            <li>Скачать и установить конфигурацию TDMS <b><a href="#">отсюда</a>.</b></li>
                            <li>Запустить TDMS Администратор и создать новую базу данных.</li>
                            <li>Проверить подключение к созданной базе данных, запустив TDMS.</li>
                        </ol>
                    </div>
                    <div class="scroll-v tdms-scroll">
                        <i class="up"></i><div class="thumb"><i class="ridge"></i></div><i class="down"></i>
                    </div>
                </div>
            </aside>

            <section class="document">
                <div class="doc-tabs">
                    <button type="button" class="doc-tab"><span>Без имени</span></button>
                    <i class="doc-list"></i>
                </div>
                <div class="doc-body">
                    <div class="canvas">
                        <svg class="ucs" viewBox="0 0 130 130" width="130" height="130">
                            <path d="M9.500 104.500h16v16h-16zM17.500 104V27M11.500 48.500h12l-6-21zM26 112.500h78M82.500 106.500v12l21-6z" fill="none" stroke="#fff"/>
                            <text x="17.500" y="16">Y</text>
                            <text x="120" y="119">X</text>
                        </svg>
                    </div>
                    <div class="scroll-v doc-scroll">
                        <i class="up"></i><div class="thumb"><i class="ridge"></i></div><i class="down"></i>
                    </div>
                </div>
                <div class="doc-foot">
                    <div class="sheet-nav"><i class="prev"></i><i class="next"></i></div>
                    <div class="sheets">
                        <button type="button" class="current">Модель</button>
                        <button type="button">A4</button>
                        <button type="button">A3</button>
                        <button type="button">A2</button>
                        <button type="button">A1</button>
                        <button type="button">A0</button>
                    </div>
                    <button type="button" class="panes" aria-label="Видовые экраны"><svg class="icon"><use href="#panes"/></svg></button>
                    <div class="scroll-h">
                        <i class="prev"></i><div class="thumb"><i class="ridge"></i></div><i class="next"></i>
                    </div>
                    <svg class="corner" viewBox="0 0 12 12"><path d="M1 12 11 1M5 12l6-7M9 12l2-3" stroke="#888"/></svg>
                </div>
            </section>

            <div class="toolbar vertical right">
                <span class="grip"></span>
                <button type="button" aria-label="Стереть"><svg class="icon"><use href="#brush"/></svg></button>
                <button type="button" aria-label="Зеркало"><svg class="icon"><use href="#mirror"/></svg></button>
                <button type="button" aria-label="Подобие"><svg class="icon"><use href="#offset"/></svg></button>
                <button type="button" aria-label="Контур"><svg class="icon"><use href="#stretch"/></svg></button>
                <button type="button" aria-label="Массив"><svg class="icon"><use href="#array"/></svg></button>
                <span class="sep"></span>
                <button type="button" aria-label="Перенос"><svg class="icon"><use href="#move"/></svg></button>
                <button type="button" aria-label="Поворот"><svg class="icon"><use href="#rotate"/></svg></button>
                <span class="sep"></span>
                <button type="button" aria-label="Масштаб"><svg class="icon"><use href="#scale"/></svg></button>
                <button type="button" aria-label="Растянуть"><svg class="icon"><use href="#resize"/></svg></button>
                <span class="sep"></span>
                <button type="button" aria-label="Обрезать"><svg class="icon"><use href="#trim"/></svg></button>
                <button type="button" aria-label="Удлинить"><svg class="icon"><use href="#extend"/></svg></button>
                <button type="button" aria-label="Разорвать"><svg class="icon"><use href="#break"/></svg></button>
                <button type="button" aria-label="Разорвать в точке"><svg class="icon"><use href="#join"/></svg></button>
                <button type="button" aria-label="Выровнять"><svg class="icon"><use href="#align"/></svg></button>
                <span class="sep"></span>
                <button type="button" aria-label="Фаска"><svg class="icon"><use href="#chamfer"/></svg></button>
                <button type="button" aria-label="Сопряжение"><svg class="icon"><use href="#fillet"/></svg></button>
                <span class="sep"></span>
                <button type="button" aria-label="Разбить"><svg class="icon"><use href="#bomb"/></svg></button>
                <button type="button" aria-label="Разрушить"><svg class="icon"><use href="#explode"/></svg></button>
                <span class="grip"></span>
                <button type="button" aria-label="На передний план"><svg class="icon"><use href="#order-1"/></svg></button>
                <button type="button" aria-label="На задний план"><svg class="icon"><use href="#order-2"/></svg></button>
                <button type="button" aria-label="Поместить перед"><svg class="icon"><use href="#order-3"/></svg></button>
                <button type="button" aria-label="Поместить за"><svg class="icon"><use href="#order-4"/></svg></button>
            </div>
        </main>

        <section class="command">
            <header class="command-title">
                <button type="button" aria-label="Закрыть командную строку"><svg class="icon"><use href="#close"/></svg></button>
                <button type="button" aria-label="Закрепить командную строку"><svg class="icon"><use href="#pin"/></svg></button>
                <h2>Кома</h2>
            </header>
            <div class="command-main">
                <div class="history">
                    <pre>startscr - Экран приветствия
NEW,НОВЫЙ - Создать
params - Настройки
3DMESH,3DСЕТЬ,3-СЕТЬ - 3D сеть</pre>
                    <div class="scroll-v"><i class="up"></i><i class="down"></i></div>
                </div>
                <input type="text" aria-label="Командная строка" value="Размер сети в направлении M:">
            </div>
        </section>

        <footer class="status-bar">
            <output>-8603.0782,57225.624,0</output>
            <div class="modes">
                <button type="button">ШАГ</button>
                <button type="button">СЕТКА</button>
                <button type="button" class="on">оПРИВЯЗКА</button>
                <button type="button" class="on">ОТС-ОБЪЕКТ</button>
                <button type="button" class="on">ОТС-ПОЛЯР</button>
                <button type="button">ОРТО</button>
                <button type="button" class="on">ВЕС</button>
                <button type="button" class="on">ШТРИХОВКА</button>
            </div>
            <div class="view-tools">
                <button type="button" aria-label="Вес линий"><svg class="icon"><use href="#lines-mode"/></svg></button>
                <button type="button" aria-label="Сетка"><svg class="icon"><use href="#grid-mode"/></svg></button>
                <button type="button" class="scale">m1:100</button>
                <button type="button" aria-label="Панорама"><svg class="icon"><use href="#hand"/></svg></button>
                <button type="button" aria-label="Зумирование"><svg class="icon"><use href="#zoom"/></svg></button>
                <button type="button" aria-label="Показать все"><svg class="icon"><use href="#zoom-all"/></svg></button>
                <button type="button" aria-label="Показать рамкой"><svg class="icon"><use href="#zoom-window"/></svg></button>
                <button type="button" aria-label="Перерисовать"><svg class="icon"><use href="#refresh"/></svg></button>
                <button type="button" aria-label="Во весь экран"><svg class="icon"><use href="#fit"/></svg></button>
                <svg class="corner" viewBox="0 0 12 12"><path d="M9 1h2v2H9zM9 5h2v2H9zM9 9h2v2H9zM5 5h2v2H5zM5 9h2v2H5zM1 9h2v2H1z" fill="#222"/></svg>
            </div>
        </footer>
    </div>
</div>
</body>
</html>
```
FILE: styles.css
```css
* {box-sizing: border-box;}
body {margin: 0; height: 100vh; overflow: hidden; background: linear-gradient(90deg, #1a1d22, #41627a 40%, #8fb0c8 58%, #16302e 70%); font-family: "Noto Sans", "Open Sans", sans-serif; font-size: 11px;}
button {font: inherit; color: inherit; border: none; background: none; padding: 0; margin: 0;}
h1, h2, p, ul, ol, pre {margin: 0; padding: 0; font-weight: normal;}
.sprite {position: absolute; width: 0; height: 0;}
.icon {width: 16px; height: 16px; display: block; flex: none;}

/* window frame */
.window {height: calc(100vh - 3px); display: flex; flex-direction: column; padding: 0 7px 7px; border: 1px solid #10151b; border-radius: 7px;
    box-shadow: inset 0 0 0 1px rgba(255,255,255,.75);
    background: linear-gradient(180deg, #cfdeee, #e4ecf5 110px, #1c2733 140px, #1d2a33 270px, #6d8050 360px, #2a3a33 480px, #5a6c7c 700px, #273038) left / 8px 100% no-repeat,
    linear-gradient(180deg, #a9b5b0, #5c6e60 90px, #b8c4b6 200px, #20402f 300px, #0b241f 500px, #1d4a3f 800px) right / 8px 100% no-repeat,
    linear-gradient(90deg, #1f1d1f, #45586a 25%, #7fa6c6 32%, #2d3942 40%, #2d7fa5 65%, #0f302b 70%, #143a33);}
.title-bar {position: relative; height: 29px; flex: none; display: flex; align-items: center; gap: 5px; margin: 0 -6px; padding-left: 7px; overflow: hidden; border-radius: 6px 6px 0 0;
    border-bottom: 1px solid #a9c4da; box-shadow: inset 0 1px rgba(255,255,255,.8);
    background: radial-gradient(26px 20px at 195px 29px, transparent 40%, #a8605f 70%, transparent),
    radial-gradient(28px 24px at 116px 20px, #7db8cf, transparent),
    radial-gradient(30px 20px at 418px 24px, #7fb3de, transparent),
    radial-gradient(120px 10px at 380px 20px, #4581b4, transparent),
    radial-gradient(28px 18px at 640px 16px, #1f6f90, transparent),
    radial-gradient(30px 12px at 650px 27px, #5fa8d0, transparent),
    radial-gradient(22px 20px at 1252px 24px, #9cc8ee 20%, transparent),
    radial-gradient(60px 20px at 1330px 28px, #7aa5d0, transparent),
    radial-gradient(60px 16px at 1485px 30px, #cfe1f5 40%, transparent),
    linear-gradient(90deg, #dce9f7, #c6d5e8 5%, #9fb6cf 9%, #6f98bb 13%, #3f79a6 17%, #2a6496 24%, #2a628f 32%, #29648f 41%, #7d9fc7 44%, #9dbadd 47%, #aecbe9 52%, #9dbde2 58%, #1d4a80 63%, #1c4a7e 72%, #2a5f94 85%, #5d6b74 88%, #55606a 93%, #9aa59f);}
.title-bar h1 {font-size: 12px; color: #000;}
.caption-buttons {display: flex; align-self: flex-start; margin: 0 0 0 auto; padding-right: 5px;}
.caption-buttons button {width: 28px; height: 20px; border: 1px solid #dfe6ec; border-width: 0 1px 1px 0; background: linear-gradient(#b9c0c6 45%, #70787f 50%, #a5adb3); display: grid; place-items: center; outline: 1px solid #333; outline-offset: -1px;}
.caption-buttons button:first-child {border-radius: 0 0 0 5px;}
.caption-buttons svg {width: 16px; height: 12px;}
.caption-buttons .close {width: 47px; background: linear-gradient(#e0a090 45%, #b93a24 50%, #d5694f); border-radius: 0 0 5px 0;}

.client {flex: 1; min-height: 0; display: flex; flex-direction: column; background: #535353;}

/* menu bar */
.menu-bar {height: 27px; flex: none; display: flex; align-items: center; color: #fff; padding: 0 0 2px;}
.menu-bar > button, .menu-open > button {height: 22px; padding: 0 7px;}
.menu-bar .active {background: linear-gradient(#8b94a5, #6c7482); color: #111; border: 1px solid #8f959e; border-bottom: none;}
.menu-open {position: relative;}
.drop-menu {position: absolute; z-index: 5; left: 0; top: 22px; width: 199px; list-style: none; padding: 2px 1px; border: 1px solid #9b9b9b; color: #444; background: linear-gradient(90deg, #ededed 25px, #bbb 25px, #bbb 26px, #fafafa 26px);}
.drop-menu button {display: grid; grid-template-columns: 17px 1fr auto; column-gap: 8px; align-items: center; width: 100%; height: 25px; padding: 0 4px; text-align: left; border: 1px solid transparent; border-radius: 2px; white-space: nowrap;}
.drop-menu .hover {border-color: #e0c267; background: linear-gradient(#fffbe0, #ffeaa0 45%, #ffd653 50%, #ffe183); background-clip: padding-box;}
.drop-menu .line {height: 8px; margin-left: 31px; background: linear-gradient(#bdbdbd, #bdbdbd) 0 3px / 100% 1px no-repeat;}
.drop-menu kbd {font: inherit; padding-right: 6px;}
.drop-menu u {text-underline-offset: 2px;}
.more {border: 4px solid transparent; border-left: 5px solid #333; border-right: 0;}

/* toolbars */
.toolbars {display: flex; flex-direction: column; align-items: flex-start; gap: 1px; padding-bottom: 1px;}
.toolbar {display: flex; align-items: center; height: 23px; border-radius: 3px; background: linear-gradient(#c6c9cf, #a9adb5 60%, #8f939a);}
.toolbar button {position: relative; flex: none; width: 21px; height: 21px; display: grid; place-items: center;}
.grip {flex: none; width: 10px; height: 15px; background: linear-gradient(#222 2px, transparent 2px) 4px 1px / 2px 4px repeat-y;}
.menu-bar .grip {background: linear-gradient(#eee 2px, transparent 2px) 5px 1px / 2px 4px repeat-y;}
.sep {flex: none; width: 8px; height: 20px; background: linear-gradient(#fff, #fff) 3px 0 / 1px 100% no-repeat;}
.fly::after {content: ""; position: absolute; right: 0; bottom: 1px; border: 2px solid; border-color: transparent #2f86dd #2f86dd transparent;}
.toolbar .undo {margin-right: 200px;}
.toolbar select {appearance: none; height: 21px; margin-right: 5px; border: 2px solid #fff; border-color: #666 #fff #fff #666; border-right-width: 3px; border-radius: 0; background: #f0f0f0; box-shadow: 2px 0 #999, 3px 0 #eee;}
.style-box {width: 205px;}
.layer-box {width: 396px;}
.prop-box {width: 145px;}
.toolbar.vertical {flex-direction: column; align-self: flex-start; width: 24px; height: auto; background: linear-gradient(90deg, #c6c9cf, #a9adb5 60%, #9599a0);}
.vertical .grip {width: 15px; height: 10px; background: linear-gradient(90deg, #222 2px, transparent 2px) 0 4px / 4px 2px repeat-x;}
.vertical .sep {width: 21px; height: 8px; background: linear-gradient(#fff, #fff) 0 3px / 100% 1px no-repeat;}
.vertical.left {padding-bottom: 8px;}
.vertical.right {margin-left: auto;}
.glyph-help {font: bold 12px "Liberation Sans", sans-serif; fill: #fff; text-anchor: middle;}
.glyph-style {font: 16px "Liberation Serif", serif; fill: #333; text-anchor: middle;}
.glyph-text {font: 22px "Liberation Serif", serif; fill: #444; text-anchor: middle;}
.vertical .icon {overflow: visible;}

.workspace {flex: 1; min-height: 0; display: grid; grid-template-columns: 25px 219px minmax(0, 1fr) 25px; grid-template-rows: minmax(0, 1fr);}

/* TDMS panel */
.tdms {display: flex; flex-direction: column; border: 1px solid #ddd; border-right-width: 3px; border-bottom-width: 2px; min-height: 0;}
.panel-title {height: 21px; flex: none; display: flex; align-items: center; background: #9b9e9c; border-bottom: 1px solid #ddd;}
.panel-title h2 {flex: 1; font-size: 11px; color: #444; padding-left: 2px;}
.tdms-body {flex: 1; min-height: 0; display: flex; background: #fff; border: 1px solid #666; border-width: 1px 0 0 1px;}
.tdms-text {flex: 1; overflow: hidden; padding: 15px 14px 0 10px; font: 16px/19px "Liberation Serif", serif; color: #000;}
.tdms-text p {padding-right: 4px;}
.tdms-text ol {padding-left: 40px; margin-top: 38px;}
.tdms-text li {margin-bottom: 19px;}
.tdms-text li::marker {content: counter(list-item) ".\00a0\00a0\00a0";}
.tdms-text a {color: #00f;}

/* scroll bars */
.scroll-v, .scroll-h {display: flex; align-items: center; justify-content: space-between; background: #f0f0f0;}
.scroll-v {flex: none; width: 16px; flex-direction: column; padding: 7px 0;}
.scroll-h {height: 17px; padding: 0 6px;}
.thumb {display: grid; place-items: center; border: 1px solid #999; border-radius: 2px;}
.scroll-v .thumb {width: 15px; background: linear-gradient(90deg, #f5f5f5 50%, #dcdcdc 55%, #cfcfcf);}
.scroll-h .thumb {height: 15px; background: linear-gradient(#f5f5f5 50%, #dcdcdc 55%, #cfcfcf);}
.ridge {width: 8px; height: 8px; background: repeating-linear-gradient(#555 0 1px, transparent 1px 3px);}
.scroll-h .ridge {background: repeating-linear-gradient(90deg, #555 0 1px, transparent 1px 3px);}
.up, .down {border: 4px solid transparent;}
.up {border-bottom-color: #333; border-top: 0;}
.down {border-top-color: #333; border-bottom: 0;}
.prev, .next {border: 4px solid transparent;}
.prev {border-right-color: #333; border-left: 0;}
.next {border-left-color: #333; border-right: 0;}
.tdms-scroll .thumb {height: 64%; margin: 8px 0 auto;}
.doc-scroll .thumb {height: 48%; margin: 8px 0 auto;}
.scroll-h .thumb {width: 65%; margin: 0 9px 0 auto;}

/* document */
.document {display: flex; flex-direction: column; margin-left: 5px; border: 1px solid #ddd; border-right: 4px solid #fff; border-bottom: 3px solid #fff; background: #f0f0f0; min-height: 0;}
.doc-tabs {height: 21px; flex: none; display: flex; align-items: center; justify-content: space-between; background: linear-gradient(#9b9fa5, #c9ccd1); border-bottom: 2px solid #fff;}
.doc-tab {align-self: stretch; padding: 0 24px; font: bold 11px "Noto Sans", sans-serif; background: #fff; clip-path: polygon(18px 0, calc(100% - 4px) 0, 100% 4px, 100% 100%, 0 100%);}
.doc-list {border: 5px solid transparent; border-top: 5px solid #444; border-bottom: 0; margin-right: 3px;}
.doc-body {flex: 1; min-height: 0; display: flex; border-left: 3px double #888;}
.canvas {flex: 1; display: flex; align-items: flex-end; background: #000; padding: 0 0 17px 17px;}
.ucs text {font: 16px "Liberation Sans", sans-serif; fill: #fff; text-anchor: middle;}
.doc-foot {height: 21px; flex: none; display: flex; align-items: center; border-top: 1px solid #777;}
.sheet-nav {display: flex; gap: 14px; padding-left: 12px;}
.sheets {display: flex; height: 18px; padding-left: 8px; align-self: flex-start;}
.sheets button {position: relative; width: 27px; font-family: "Liberation Sans", sans-serif; font-size: 12px; color: #222;}
.sheets button::before, .sheets button::after {content: ""; position: absolute; top: 0; bottom: 0; width: 50%; border: 0 solid #666; border-bottom-width: 1px;}
.sheets button::before {left: 0; border-left-width: 1px; transform: skewX(-24deg);}
.sheets button::after {right: 0; border-right-width: 1px; transform: skewX(-24deg);}
.sheets .current {width: 58px; font-weight: bold; color: #000; background: linear-gradient(#fff, #fff) 4px 0 / 50px 17px no-repeat;}
.sheets .current::before {transform: skewX(24deg);}
.panes {margin-left: auto; padding: 0 2px 0 0; border-right: 2px solid #999;}
.scroll-h {flex: none; width: 50%; margin-right: 5px;}
.doc-foot .corner {width: 12px; height: 12px; flex: none; align-self: flex-end;}

/* command line */
.command {flex: none; height: 71px; display: flex; margin: 4px 26px 0 25px; border-top: 2px solid #ddd;}
.command-title {width: 17px; flex: none; display: flex; flex-direction: column; align-items: center; gap: 3px; overflow: hidden; background: #9b9e9c;}
.command-title button:last-of-type .icon {transform: rotate(90deg);}
.command-title h2 {margin-top: auto; writing-mode: vertical-rl; transform: rotate(180deg); font-size: 12px; line-height: 16px; white-space: nowrap; color: #555;}
.command-main {flex: 1; min-width: 0; display: flex; flex-direction: column;}
.history {flex: 1; min-height: 0; display: flex; align-items: stretch; background: #f0f0f0; border: 1px solid #666; border-right: 0;}
.history pre {flex: 1; align-self: flex-end; max-height: 100%; display: flex; align-items: flex-end; overflow: hidden; padding: 0 0 1px 2px; color: #222;}
.history pre, .command input {font: 12px/14px "DejaVu Sans Mono", monospace;}
.history .scroll-v {border-left: 1px solid #ddd;}
.command input {flex: none; height: 16px; border: none; border-radius: 0; padding: 0 2px; background: #fff; color: #000; outline: none;}

/* status bar */
.status-bar {flex: none; height: 23px; display: flex; align-items: center; background: linear-gradient(#42434f, #35363a 35%, #303134 70%, #222); color: #fff;}
.status-bar output {width: 215px; padding-left: 4px;}
.modes {display: flex; gap: 1px; border-right: 1px solid #888; padding-right: 4px;}
.status-bar button {height: 19px; padding: 0 3px; color: #000; border: 1px solid #999; border-radius: 2px; background: linear-gradient(#fff, #f2f2f4 45%, #dddfe6 50%, #fff); white-space: nowrap;}
.status-bar .on {background: linear-gradient(#fbe0b4, #fdc872 45%, #fbb03e 50%, #ffe08a); border-color: #b58a4c;}
.view-tools {margin-left: auto; align-self: stretch; display: flex; align-items: center; gap: 2px; padding-left: 7px; background: linear-gradient(#77787c, #b9bac0 40%, #85868b); border-left: 2px solid #222;}
.view-tools button {width: 20px; padding: 0 1px;}
.view-tools .scale {width: 88px;}
.view-tools .corner {width: 12px; height: 12px; align-self: flex-end; margin-left: 5px;}
```
